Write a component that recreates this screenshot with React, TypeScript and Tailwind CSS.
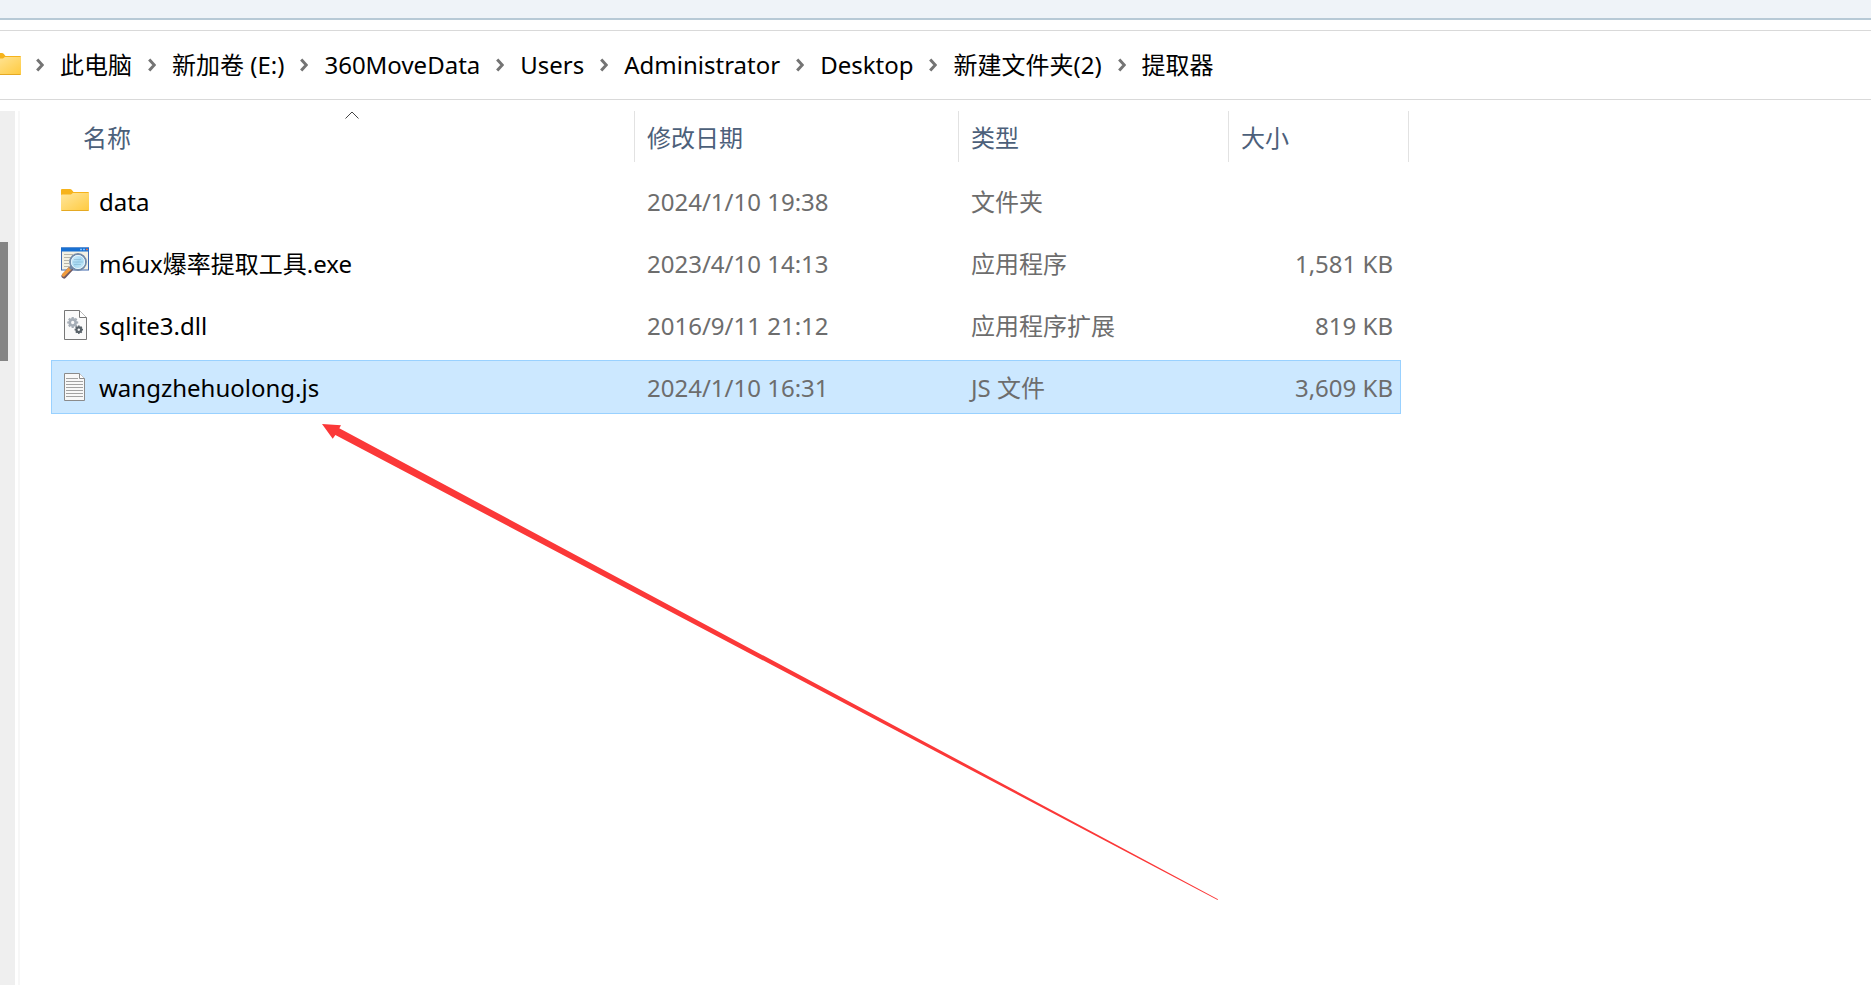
import { Fragment, useState } from "react";

type FileKind = "folder" | "exe" | "dll" | "text";

interface FileEntry {
  name: string;
  modified: string;
  type: string;
  size: string;
  kind: FileKind;
}

const PATH = ["此电脑", "新加卷 (E:)", "360MoveData", "Users", "Administrator", "Desktop", "新建文件夹(2)", "提取器"];

const COLUMNS = ["名称", "修改日期", "类型", "大小"];

const FILES: FileEntry[] = [
  { name: "data", modified: "2024/1/10 19:38", type: "文件夹", size: "", kind: "folder" },
  { name: "m6ux爆率提取工具.exe", modified: "2023/4/10 14:13", type: "应用程序", size: "1,581 KB", kind: "exe" },
  { name: "sqlite3.dll", modified: "2016/9/11 21:12", type: "应用程序扩展", size: "819 KB", kind: "dll" },
  { name: "wangzhehuolong.js", modified: "2024/1/10 16:31", type: "JS 文件", size: "3,609 KB", kind: "text" },
];

function FolderIcon() {
  return (
    <svg width="28" height="32" viewBox="0 0 28 32" className="shrink-0">
      <defs>
        <linearGradient id="folder-front" x1="0" y1="0" x2="1" y2="1">
          <stop offset="0" stopColor="#ffe69c" />
          <stop offset="1" stopColor="#ffca3e" />
        </linearGradient>
      </defs>
      <path d="M0 5Q0 4 1 4H9Q10 4 10.700 4.700L12.500 7H27Q28 7 28 8V14H0Z" fill="#f6b31b" />
      <path d="M0 10.500Q0 9.500 1 9.500H9Q10 9.500 10.700 8.900L11.800 8H28V25Q28 26 27 26H1Q0 26 0 25Z" fill="url(#folder-front)" />
      <path d="M0.500 25.500H27.500" stroke="#e5a923" />
    </svg>
  );
}

function ExeIcon() {
  return (
    <svg width="28" height="32" viewBox="0 0 28 32" className="shrink-0">
      <defs>
        <linearGradient id="lens" x1="0" y1="0" x2="1" y2="1">
          <stop offset="0" stopColor="#e3f5ff" />
          <stop offset="0.5" stopColor="#a5d8f3" />
          <stop offset="1" stopColor="#d8f3fa" />
        </linearGradient>
      </defs>
      <rect x="0.500" y="1" width="27" height="22" fill="#f3f1e4" stroke="#4069ae" />
      <rect x="0" y="0.500" width="28" height="4" fill="#1870d2" />
      <path d="M19 2.500H21M22 2.500H24" stroke="#7fc0ff" strokeWidth="1.500" />
      <path d="M25 2.500H27" stroke="#ec6a45" strokeWidth="1.500" />
      <path d="M3 7.500H12M3 10.500H10M3 13.500H8M3 16.500H8M3 19.500H8" stroke="#b7b6aa" />
      <path d="M9.500 22L3 29" stroke="#6f5965" strokeWidth="5" strokeLinecap="round" />
      <path d="M8.500 22L2.500 28" stroke="#f19b3d" strokeWidth="3.200" strokeLinecap="round" />
      <path d="M11.500 19.500L9 22" stroke="#7286a4" strokeWidth="3" />
      <circle cx="17" cy="15" r="8" fill="url(#lens)" stroke="#7189a8" strokeWidth="1.800" />
      <circle cx="17" cy="15" r="6.600" fill="none" stroke="#e7f5fb" />
      <path d="M13 12.500H20M12 15H22M13 17.500H20" stroke="#82b5d0" strokeOpacity="0.6" />
    </svg>
  );
}

function Gear({ x, y, r, color }: { x: number; y: number; r: number; color: string }) {
  return (
    <g transform={`translate(${x} ${y})`} stroke={color} fill="none">
      <circle r={r * 0.55} strokeWidth={r * 0.5} />
      {[0, 45, 90, 135, 180, 225, 270, 315].map((a) => (
        <path key={a} d={`M0 ${-r * 0.7}V${-r}`} strokeWidth={r * 0.4} transform={`rotate(${a})`} />
      ))}
    </g>
  );
}

function DllIcon() {
  return (
    <svg width="28" height="32" viewBox="0 0 28 32" className="shrink-0">
      <path d="M3.500 1.500H18.500L25.500 8.500V30.500H3.500Z" fill="#fafafa" stroke="#777" />
      <path d="M18.500 1.500V8.500H25.500" fill="#fff" stroke="#777" />
      <Gear x={11.7} y={13.5} r={5.5} color="#a5adb6" />
      <Gear x={17.8} y={20.7} r={4.2} color="#596269" />
    </svg>
  );
}

function TextIcon() {
  return (
    <svg width="28" height="32" viewBox="0 0 28 32" className="shrink-0">
      <path d="M3.500 2.500H18.500L23.500 7.500V29.500H3.500Z" fill="#f8f8f8" stroke="#8b8b8b" />
      <path d="M18.500 2.500V7.500H23.500" fill="#fff" stroke="#8b8b8b" />
      <path d="M5 7.500H17M5 10.500H22M5 13.500H22M5 16.500H22M5 19.500H22M5 22.500H22M5 25.500H22" stroke="#a2a2a2" />
    </svg>
  );
}

function FileIcon({ kind }: { kind: FileKind }) {
  if (kind === "folder") return <FolderIcon />;
  if (kind === "exe") return <ExeIcon />;
  if (kind === "dll") return <DllIcon />;
  return <TextIcon />;
}

function Chevron() {
  return (
    <svg width="8" height="14" viewBox="0 0 8 14" className="shrink-0">
      <path d="M1.200 1.500L6.300 7L1.200 12.500" fill="none" stroke="#747474" strokeWidth="3" />
    </svg>
  );
}

function AddressBar() {
  return (
    <nav aria-label="地址" className="flex h-[70px] items-center overflow-hidden border-y border-[#d9d9d9] whitespace-nowrap">
      <div className="-ml-[7px] mr-[15px] flex">
        <FolderIcon />
      </div>
      {PATH.map((part) => (
        <Fragment key={part}>
          <Chevron />
          <button type="button" className="mx-4 text-black">{part}</button>
        </Fragment>
      ))}
    </nav>
  );
}

function FileTable() {
  const [selected, setSelected] = useState("wangzhehuolong.js");

  return (
    <table className="block w-[1358px] text-left">
      <thead className="block">
        <tr className="grid h-[51px] grid-cols-[584px_324px_270px_1fr]">
          {COLUMNS.map((label, i) => (
            <th key={label} scope="col" className="relative flex items-center border-r border-[#e2e2e2] pl-3 pt-[2px] font-normal text-[#4c607a] first:pl-8">
              {i === 0 && (
                <svg width="14" height="8" viewBox="0 0 14 8" className="absolute top-0 left-[294px]">
                  <path d="M0.500 7.500L7 1L13.500 7.500" fill="none" stroke="#444" />
                </svg>
              )}
              <button type="button">{label}</button>
            </th>
          ))}
        </tr>
      </thead>
      <tbody className="mt-3 mr-2 flex flex-col gap-2">
        {FILES.map((file) => (
          <tr
            key={file.name}
            onClick={() => setSelected(file.name)}
            className={`grid h-[54px] grid-cols-[583px_324px_270px_1fr] items-center border text-[#6d6d6d] ${
              selected === file.name ? "border-[#99d1ff] bg-[#cce8ff]" : "border-transparent"
            }`}
          >
            <td className="flex items-center gap-[10px] pl-[9px] text-black">
              <FileIcon kind={file.kind} />
              <span className="pt-[2px]">{file.name}</span>
            </td>
            <td className="pt-[2px] pl-3">{file.modified}</td>
            <td className="pt-[2px] pl-3">{file.type}</td>
            <td className="pt-[2px] pr-[7px] text-right">{file.size}</td>
          </tr>
        ))}
      </tbody>
    </table>
  );
}

export default function App() {
  return (
    <div className="relative flex min-h-screen flex-col overflow-hidden bg-white font-['Noto_Sans','Noto_Sans_CJK_SC',sans-serif] text-[24px] leading-8">
      <div className="h-5 border-b-2 border-[#b7c9d6] bg-[#eff3f8]" />
      <div className="h-[10px]" />
      <AddressBar />
      <div className="flex grow pt-[11px]">
        <div className="w-[15px] shrink-0 bg-[#efefef] pt-[131px]">
          <div className="h-[119px] w-2 bg-[#858585]" />
        </div>
        <div className="mr-[31px] ml-[3px] w-[2px] shrink-0 bg-[#f7f7f7]" />
        <FileTable />
      </div>
      <svg width="900" height="480" viewBox="0 0 900 480" className="pointer-events-none absolute top-[424px] left-[322px]">
        <path d="M0 0L19 1.300L17.300 4.300L896 475.200L895.600 476L13.400 11L10.700 14.700Z" fill="#fb3838" />
      </svg>
    </div>
  );
}
